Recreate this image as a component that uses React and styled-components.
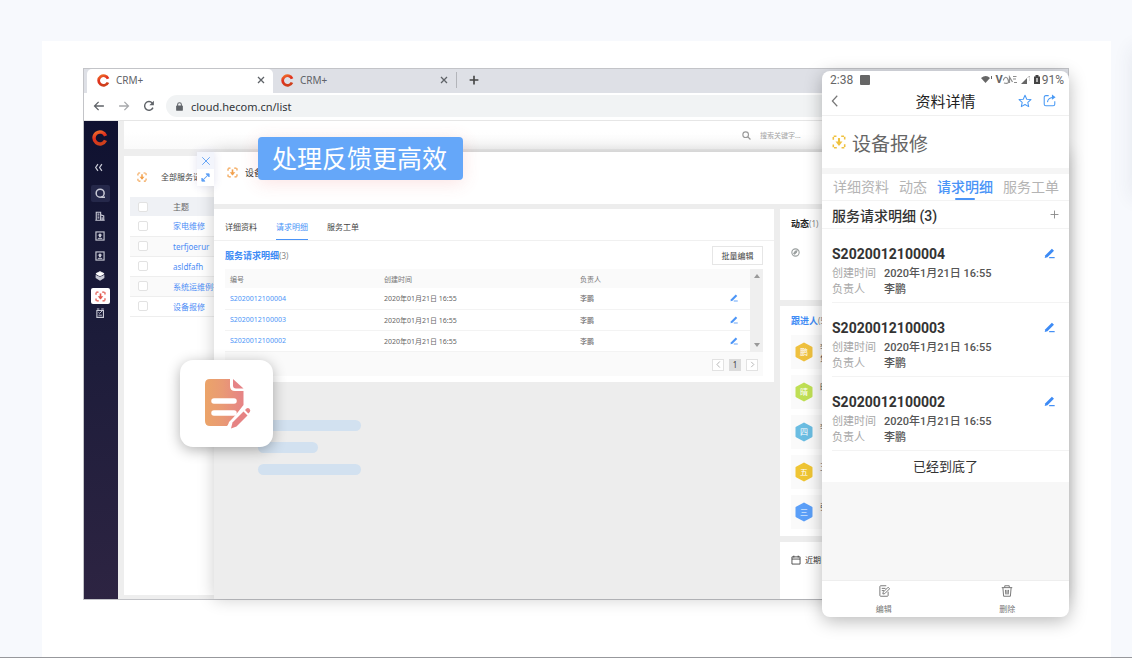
import React from "react";
import styled, { createGlobalStyle } from "styled-components";

const GlobalStyle = createGlobalStyle`
  *, *::before, *::after { box-sizing: border-box; }
  body {
    margin: 0;
    background: #f7f9fd;
    color: #333;
    font-family: "Noto Sans", "Noto Sans CJK SC", sans-serif;
    font-size: 8px;
  }
  button, input { font: inherit; color: inherit; margin: 0; }
  button { padding: 0; border: 0; background: none; display: inline-flex; align-items: center; justify-content: center; }
  a { text-decoration: none; color: inherit; }
  h1, h2, h3, p, ul, dl, dd { margin: 0; padding: 0; font-weight: inherit; font-size: inherit; }
  ul { list-style: none; }
  table { border-collapse: collapse; border-spacing: 0; table-layout: fixed; width: 100%; }
  th, td { padding: 0; text-align: left; font-weight: 400; }
  svg { display: block; flex: none; }
`;

/* ---------- page ---------- */

const Page = styled.main`
  position: relative;
  min-height: 100vh;
  padding: 41px 21px 0 42px;
  border-bottom: 1px solid #97989c;
  overflow: hidden;
  display: flex;

  &::after {
    content: "";
    position: absolute;
    left: 100%;
    top: 48px;
    width: 40px;
    height: 150px;
    box-shadow: 0 0 20px rgba(40, 50, 90, 0.09);
  }
`;

const Panel = styled.section`
  flex: 1;
  min-width: 0;
  background: #fff;
  padding: 27px 42px 57px 41px;
`;

const Stage = styled.div`
  position: relative;
`;

/* ---------- browser chrome ---------- */

const Browser = styled.div`
  display: flex;
  flex-direction: column;
  border: 1px solid #c3c4c8;
  background: #fff;
`;

const TabStrip = styled.div`
  display: flex;
  height: 24px;
  padding-left: 3px;
  background: #dee0e6;
  color: #5f6368;
`;

const BrowserTab = styled.div`
  display: flex;
  align-items: center;
  gap: 6px;
  width: ${(p) => (p.$active ? 186 : 184)}px;
  padding: 0 8px 2px 10px;
  font-size: 10px;
  background: ${(p) => (p.$active ? "#fff" : "transparent")};
  border-radius: ${(p) => (p.$active ? "5px 5px 0 0" : "0")};
  ${(p) => !p.$active && "height: 16px; margin-top: 3px; padding: 0 8px; border-right: 1px solid #b3b5ba;"}

  span { flex: 1; }
`;

const NewTab = styled.button`
  width: 34px;
  padding-bottom: 2px;
  color: #444;
`;

const AddressRow = styled.div`
  display: flex;
  align-items: center;
  height: 28px;
  padding: 0 0 1px 9px;
  gap: 13px;
  border-bottom: 1px solid #e6e6e6;
  color: #5f6368;
`;

const AddressField = styled.label`
  flex: 1;
  display: flex;
  align-items: center;
  gap: 7px;
  height: 22px;
  margin-left: -2px;
  padding-left: 9px;
  border-radius: 11px 0 0 11px;
  background: #f1f3f4;

  input {
    flex: 1;
    min-width: 0;
    border: 0;
    padding: 0;
    background: none;
    outline: 0;
    font-size: 11px;
    color: #33363a;
  }
`;

/* ---------- app shell ---------- */

const Shell = styled.div`
  display: flex;
  height: 478px;
`;

const Sidebar = styled.nav`
  display: flex;
  flex-direction: column;
  align-items: center;
  width: 34px;
  padding: 9px 2px 0 0;
  background: linear-gradient(175deg, #0f1130 0%, #1c1c3a 45%, #2d2442 100%);
  color: #c9cad6;
`;

const SideButton = styled.button`
  width: 19px;
  height: 20px;
  ${(p) => p.$first && "height: 26px; margin-top: 8px; padding-right: 4px;"}
  ${(p) => p.$boxed && "height: 17px; margin: 5px 0 4px; background: #25284a; border-radius: 2px;"}
  ${(p) => p.$active && "height: 16px; margin-top: 2px; background: #fff; color: #e2574c; border-radius: 2px;"}
  ${(p) => p.$last && "height: 17px;"}
`;

const Content = styled.div`
  flex: 1;
  min-width: 0;
  display: flex;
  flex-direction: column;
  padding-left: 6px;
  background: #eee;
`;

const TopBar = styled.div`
  display: flex;
  align-items: center;
  justify-content: flex-end;
  height: 28px;
  padding-right: 206px;
  background: linear-gradient(#fff 40%, #fafafa);
`;

const SearchField = styled.label`
  display: flex;
  align-items: center;
  gap: 9px;
  width: 120px;
  color: #999;

  input {
    width: 100px;
    border: 0;
    padding: 0;
    outline: 0;
    background: none;
    font-size: 7px;
  }
  input::placeholder { color: #a5a5a5; opacity: 1; }
`;

const Workspace = styled.div`
  flex: 1;
  min-height: 0;
  display: flex;
`;

/* ---------- left list ---------- */

const ListPane = styled.div`
  width: 90px;
  margin: 7px 0 4px;
  padding-left: 6px;
  background: #fff;
  overflow: hidden;
`;

const ListHeading = styled.h2`
  display: flex;
  align-items: center;
  gap: 14px;
  height: 41px;
  padding-left: 7px;
  white-space: nowrap;
  color: #444;
`;

const ListTable = styled.table`
  width: 120px;

  th { height: 19px; background: #eff1f5; color: #666; }
  td { height: 20px; border-bottom: 1px solid #eee; white-space: nowrap; color: #4c8df6; }
  tr:nth-child(even) td { background: #fafafa; }
  th:first-child, td:first-child { width: 43px; padding-left: 8px; }
`;

const Check = styled.input`
  display: block;
  appearance: none;
  width: 10px;
  height: 10px;
  border: 1px solid #e2e2e2;
  border-radius: 2px;
  background: #fff;
`;

/* ---------- drawer ---------- */

const Drawer = styled.div`
  position: relative;
  flex: 1;
  min-width: 0;
  display: flex;
  flex-direction: column;
  margin-top: 3px;
  background: #ededed;
  box-shadow: 0 0 16px rgba(0, 0, 0, 0.2);
`;

const DrawerTools = styled.div`
  position: absolute;
  right: 100%;
  top: 0;
  width: 17px;
  background: #fff;
  color: #5c9ff5;
  box-shadow: 0 0 8px rgba(60, 60, 160, 0.15);

  button { display: flex; width: 17px; height: 17px; }
  button:first-child { background: #f3f5fc; }
`;

const DrawerHeader = styled.h1`
  display: flex;
  align-items: center;
  gap: 7px;
  height: 52px;
  padding: 0 0 12px 13px;
  background: #fff;
  font-size: 9px;
`;

const DrawerBody = styled.div`
  flex: 1;
  min-height: 0;
  display: grid;
  grid-template-columns: 1fr 288px;
  gap: 6px;
  padding-top: 5px;
`;

const Card = styled.section`
  background: #fff;
`;

const Tabs = styled.div`
  display: flex;
  gap: 19px;
  height: 32px;
  padding: 0 11px;
  border-bottom: 1px solid #f0f0f0;
`;

const TabButton = styled.button`
  padding-top: 5px;
  border-bottom: 1px solid ${(p) => (p.$active ? "#4a94f7" : "transparent")};
  color: ${(p) => (p.$active ? "#4a94f7" : "#444")};
`;

const DetailBlock = styled.div`
  padding: 5px 11px 6px;
`;

const BlockHeading = styled.div`
  display: flex;
  align-items: center;
  justify-content: space-between;
  height: 19px;
  margin-bottom: 4px;
`;

const Heading = styled.h3`
  font-size: 9px;
  font-weight: 700;
  white-space: nowrap;
  color: ${(p) => (p.$blue ? "#3d8bf5" : "#222")};

  small { font-size: 8px; font-weight: 400; color: #888; }
`;

const OutlineButton = styled.button`
  width: 51px;
  height: 19px;
  border: 1px solid #e6e6e6;
  color: #444;
`;

const TableWrap = styled.div`
  display: flex;
`;

const DetailTable = styled.table`
  flex: 1;
  font-size: 7px;

  th { height: 19px; background: #fafafa; color: #777; }
  td { height: 21px; border-bottom: 1px solid #f3f3f3; color: #666; }
  th:first-child, td:first-child { width: 159px; padding-left: 5px; }
  th:nth-child(2) { width: 196px; }
  th:nth-child(4) { width: 20px; }
  a { color: #4c95f7; }
`;

const ScrollRail = styled.div`
  display: flex;
  flex-direction: column;
  justify-content: space-between;
  align-items: center;
  width: 13px;
  padding: 5px 0;
  background: #efefef;
  color: #999;
`;

const Pager = styled.div`
  display: flex;
  align-items: center;
  justify-content: flex-end;
  gap: 5px;
  height: 24px;
  padding: 2px 5px 0 0;
  background: #fafafa;

  button { width: 12px; height: 12px; border: 1px solid #e2e2e2; background: #fff; color: #999; }
  button[aria-current] { background: #dcdcdc; border-color: #dcdcdc; color: #444; }
`;

const Placeholders = styled.div`
  display: flex;
  flex-direction: column;
  gap: 11px;
  padding: 38px 0 0 44px;
`;

const PlaceholderBar = styled.div`
  width: ${(p) => (p.$short ? 60 : 103)}px;
  height: 11px;
  border-radius: 6px;
  background: #d2e1f0;
`;

const SideColumn = styled.div`
  display: flex;
  flex-direction: column;
  gap: 6px;
`;

const SideCard = styled(Card)`
  padding: 8px 11px 7px;
  ${(p) => p.$feed && "height: 91px;"}
  ${(p) => p.$fill && "flex: 1; padding-top: 12px;"}
`;

const FeedIcon = styled.div`
  padding-top: 18px;
  color: #9a9f9f;
`;

const People = styled.ul`
  display: flex;
  flex-direction: column;
  gap: 6px;
  margin-top: 8px;
`;

const Person = styled.li`
  display: flex;
  align-items: center;
  gap: 7px;
  height: 34px;
  padding-left: 4px;
  background: #fafafa;
  color: #444;

  p { height: 22px; line-height: 11px; }
`;

const Schedule = styled.h3`
  display: flex;
  align-items: center;
  gap: 4px;
`;

/* ---------- overlays ---------- */

const Callout = styled.p`
  position: absolute;
  left: 175px;
  top: 69px;
  padding: 0 16px 0 14px;
  line-height: 43px;
  border-radius: 4px;
  background: #65a7f9;
  color: #fff;
  font-size: 25px;
  box-shadow: 0 3px 18px rgba(230, 80, 80, 0.16);
`;

const Tile = styled.div`
  position: absolute;
  left: 97px;
  top: 292px;
  display: flex;
  align-items: center;
  justify-content: center;
  width: 93px;
  height: 87px;
  padding-left: 3px;
  border-radius: 13px;
  background: #fff;
  box-shadow: 0 3px 14px rgba(0, 0, 0, 0.3);
`;

const Phone = styled.article`
  position: absolute;
  right: 0;
  top: 3px;
  width: 247px;
  border-radius: 8px;
  background: #fff;
  box-shadow: 0 4px 18px rgba(0, 0, 0, 0.28);
  font-family: Roboto, "Noto Sans CJK SC", sans-serif;
`;

const StatusBar = styled.div`
  display: flex;
  align-items: center;
  height: 17px;
  padding: 0 5px 0 8px;
  font-size: 12px;
  color: #666;

  svg { margin-left: 4px; }
  svg:first-of-type { margin: 0 auto 0 7px; }
  b { margin-left: 3px; font-size: 11px; }
  b + svg { margin-left: 0; }
  span { margin-left: 2px; }
`;

const PhoneHeader = styled.header`
  display: grid;
  grid-template-columns: 54px 1fr 48px;
  align-items: center;
  height: 28px;
  padding: 0 13px 2px 7px;
  border-bottom: 1px solid #f0f0f0;
  font-size: 15px;
  color: #222;
  text-align: center;

  button { justify-content: flex-start; color: #777; }
`;

const HeaderActions = styled.div`
  display: flex;
  justify-content: flex-end;
  gap: 11px;

  button { color: #4a9af5; }
`;

const PhoneTitle = styled.h2`
  display: flex;
  align-items: center;
  gap: 6px;
  height: 58px;
  padding: 0 10px;
  border-bottom: 6px solid #f5f5f5;
  font-size: 19px;
  color: #666;
`;

const PhoneTabs = styled.div`
  display: flex;
  justify-content: space-between;
  height: 27px;
  padding: 0 10px 0 11px;
  border-bottom: 1px solid #f3f3f3;
`;

const PhoneTab = styled.button`
  position: relative;
  padding-bottom: 2px;
  font-size: 14px;
  color: ${(p) => (p.$active ? "#4a94f7" : "#b4b4b4")};
  font-weight: ${(p) => (p.$active ? 500 : 400)};

  &::after {
    content: "";
    position: absolute;
    bottom: 0;
    width: 20px;
    height: 2px;
    border-radius: 1px;
    background: ${(p) => (p.$active ? "#4a94f7" : "transparent")};
  }
`;

const PhoneSection = styled.div`
  display: flex;
  align-items: center;
  justify-content: space-between;
  height: 28px;
  padding: 0 10px;
  border-bottom: 1px solid #f3f3f3;
  font-size: 14px;
  font-weight: 500;
  color: #333;

  button { color: #888; }
`;

const Record = styled.li`
  height: 74px;
  margin-left: 10px;
  padding: 13px 14px 0 0;
  border-bottom: 1px solid #f3f3f3;
`;

const RecordTitle = styled.h3`
  display: flex;
  align-items: center;
  justify-content: space-between;
  height: 24px;
  padding-bottom: 1px;
  font-size: 14px;
  font-weight: 700;
  color: #333;

  button { color: #3d8bf5; }
`;

const Fields = styled.dl`
  display: grid;
  grid-template-columns: 52px 1fr;
  font-size: 11px;
  line-height: 16px;

  dt { color: #a8a8a8; }
  dd { color: #555; font-weight: 500; }
`;

const EndNote = styled.p`
  height: 31px;
  line-height: 31px;
  text-align: center;
  font-size: 13px;
  color: #333;
`;

const PhoneSpace = styled.div`
  height: 98px;
  background: #f7f7f7;
`;

const PhoneFooter = styled.footer`
  display: grid;
  grid-template-columns: 1fr 1fr;
  height: 37px;
  border-top: 1px solid #eee;
  color: #777;

  button { flex-direction: column; gap: 6px; }
`;

/* ---------- icons ---------- */

const Svg = ({ w = 10, h, vb = "0 0 16 16", children }) => (
  <svg width={w} height={h || w} viewBox={vb} fill="none" stroke="currentColor" strokeWidth="1.5" aria-hidden="true">
    {children}
  </svg>
);

const Logo = ({ size }) => (
  <Svg w={size}>
    <defs>
      <linearGradient id="logo" x1="0" y1="0" x2="0.4" y2="1">
        <stop offset="0" stopColor="#f0702a" />
        <stop offset="0.5" stopColor="#e0301e" />
        <stop offset="1" stopColor="#cf3f1c" />
      </linearGradient>
    </defs>
    <path d="M13.600 5.800A6 6 0 1 0 13.500 10.400" stroke="url(#logo)" strokeWidth="3.400" />
  </Svg>
);

const CloseIcon = ({ size, thin }) => (
  <Svg w={size}><path d="M2 2l12 12M14 2L2 14" strokeWidth={thin ? 1.5 : 2.6} /></Svg>
);

const PlusIcon = ({ size, thin }) => (
  <Svg w={size}><path d="M8 1v14M1 8h14" strokeWidth={thin ? 1.6 : 2.6} /></Svg>
);

const ArrowIcon = ({ flip }) => (
  <Svg w={12}><path d={flip ? "M1.5 8h12.5M8.5 2.5L14 8l-5.500 5.500" : "M14.500 8H2M7.500 2.500L2 8l5.500 5.500"} strokeWidth="1.7" opacity={flip ? 0.55 : 1} /></Svg>
);

const ReloadIcon = () => (
  <Svg w={12}>
    <path d="M13.300 10.200A5.800 5.800 0 1 1 12.300 4" strokeWidth="1.900" />
    <path d="M14.500 1v6h-6z" fill="currentColor" stroke="none" />
  </Svg>
);

const LockIcon = () => (
  <Svg w={9}>
    <rect x="2" y="6" width="12" height="9.500" rx="1.500" fill="currentColor" stroke="none" />
    <path d="M4.700 7V4.500a3.300 3.300 0 0 1 6.600 0V7" strokeWidth="1.800" />
  </Svg>
);

const SearchIcon = ({ size }) => (
  <Svg w={size}><circle cx="6.500" cy="6.500" r="5" strokeWidth="2" /><path d="M10 10l5 5" strokeWidth="2.200" /></Svg>
);

const QIcon = () => (
  <Svg w={11}><circle cx="7.500" cy="7.500" r="5.800" strokeWidth="2.200" /><path d="M9 13.400h5.500" strokeWidth="2.200" /></Svg>
);

const ScanIcon = ({ size }) => (
  <Svg w={size}>
    <path d="M1.500 5.500V1.500h4M10.500 1.500h4v4M14.500 10.500v4h-4M5.500 14.500h-4v-4" strokeWidth="1.800" strokeLinejoin="round" strokeDasharray="3.200 1.200" />
    <path d="M8 3.500V11" strokeWidth="2.400" />
    <path d="M4 7.500h8L8 12.500z" fill="currentColor" stroke="none" />
  </Svg>
);

const EditIcon = ({ size }) => (
  <Svg w={size}>
    <path d="M1 14.500l1-4L11.500 1l3 3L5 13.500z" fill="currentColor" stroke="none" />
    <path d="M7.500 14h8" strokeWidth="1.700" />
  </Svg>
);

const ChevronIcon = ({ size, right }) => (
  <Svg w={size}><path d={right ? "M5 2l6 6-6 6" : "M11 1L4.500 8l6.500 7"} strokeWidth="1.600" /></Svg>
);

const DoubleChevron = () => (
  <Svg w={9}><path d="M7 2L3 8l4 6M14 2l-4 6 4 6" strokeWidth="2.200" /></Svg>
);

const BuildingIcon = () => (
  <Svg w={10}><path d="M2 15V2h7v13M9 6l5 2v7M0.500 14.800h15M4 5h3M4 8h3M4 11h3M11.500 10v4" strokeWidth="1.800" /></Svg>
);

const BadgeIcon = () => (
  <Svg w={10}>
    <rect x="1.500" y="1.500" width="13" height="13" strokeWidth="1.800" />
    <path d="M8 3.500l4 3.800H9.700V10H6.300V7.300H4z" fill="currentColor" stroke="none" />
    <path d="M4.500 11.800h7" />
  </Svg>
);

const BoxIcon = () => (
  <Svg w={10}>
    <path d="M8 1l6.500 3.200L8 8 1.500 4.200z" fill="#fff" stroke="#fff" />
    <path d="M1 6l7 3.500L15 6v5l-7 4.500L1 11z" fill="currentColor" stroke="none" />
  </Svg>
);

const ChecklistIcon = () => (
  <Svg w={10}>
    <path d="M3 4h10.500v11H3zM3 1.500h4M10 1.500h4" strokeWidth="1.800" />
    <path d="M5.500 7l2 1.500L12 4M5.500 11.500h5.500" />
  </Svg>
);

const ExpandIcon = () => (
  <Svg w={9}>
    <path d="M4 12l8-8" strokeWidth="1.800" />
    <path d="M9 1.500h5.500V7zM1.500 9v5.500H7z" fill="currentColor" />
  </Svg>
);

const Triangle = ({ down }) => (
  <svg width="6" height="4" viewBox="0 0 6 4" aria-hidden="true"><path d={down ? "M0 0h6L3 4z" : "M0 4h6L3 0z"} fill="currentColor" /></svg>
);

const CompassIcon = () => (
  <Svg w={9}><circle cx="8" cy="8" r="6.500" strokeWidth="2" /><path d="M3.500 10L7 5l5-1.500L10.500 8l-4 4z" fill="currentColor" stroke="none" /></Svg>
);

const CalendarIcon = () => (
  <Svg w={10}><path d="M1.500 3h13v11.500h-13zM1.500 6.500h13M4.500 1v3M11.500 1v3" strokeWidth="1.300" /></Svg>
);

const HexAvatar = ({ color, label }) => (
  <svg width="18" height="20" viewBox="0 0 18 20" role="img" aria-label={label}>
    <path d="M9 1.500L16.500 5.700v8.600L9 18.500 1.500 14.300V5.700z" fill={color} stroke={color} strokeWidth="2" strokeLinejoin="round" />
    <text x="9" y="13" fontSize="8" fill="#fff" textAnchor="middle">{label}</text>
  </svg>
);

const DocumentIcon = () => (
  <svg width="46" height="50" viewBox="0 0 46 50" aria-hidden="true">
    <defs>
      <linearGradient id="doc" x1="0" y1="0.300" x2="1" y2="0.300">
        <stop offset="0" stopColor="#eba469" />
        <stop offset="0.450" stopColor="#e99a74" />
        <stop offset="1" stopColor="#e68386" />
      </linearGradient>
    </defs>
    <path d="M5 0h20v7q0 5 5 5h8.500v14L22 47H5q-5 0-5-5V5q0-5 5-5z" fill="url(#doc)" />
    <path d="M28 0l10.500 9.500H31q-3 0-3-3z" fill="#e68386" />
    <path d="M9 22h20M9 34h20" stroke="#fff" strokeWidth="5.500" strokeLinecap="round" />
    <path d="M37 30L24 43l-2 7h9l14-15z" fill="#fff" />
    <path d="M26 49.500l1.500-6L38.500 32.500l4 4-11 11z" fill="#e68383" />
    <path d="M40 31l1.500-1.500q1.500-1 3 .300 1.500 1.700.3 3.200L43.300 34.500z" fill="#e68383" />
  </svg>
);

const StarIcon = () => (
  <Svg w={14}><path d="M8 1.500l2 4.400 4.800.5-3.600 3.200 1 4.800L8 12l-4.200 2.400 1-4.800L1.200 6.400 6 5.900z" strokeWidth="1.200" strokeLinejoin="round" /></Svg>
);

const ShareIcon = () => (
  <Svg w={13}>
    <path d="M7 2H3.500Q1.500 2 1.500 4v8.500q0 2 2 2h9q2 0 2-2V9" strokeWidth="1.300" />
    <path d="M5.500 10q.5-5.500 8-6" strokeWidth="1.300" />
    <path d="M11 .500L15.500 4 11 7z" fill="currentColor" stroke="none" />
  </Svg>
);

const NoteIcon = () => (
  <Svg w={12}>
    <path d="M13.500 9v5q0 1-1 1h-9q-1 0-1-1V2q0-1 1-1H11M5 4.500h5M5 7.500h3" strokeWidth="1.300" />
    <path d="M6.500 12l.5-2.500L13.500 3 15.500 5 9 11.500z" strokeWidth="1.300" />
  </Svg>
);

const TrashIcon = () => (
  <Svg w={12}><path d="M1 3.500h14M5 3.500V1h6v2.500M2.500 3.500l1 11.500h9l1-11.500M6 6.500l.4 6M10 6.500l-.4 6M8 6.500v6" strokeWidth="1.300" /></Svg>
);

/* ---------- data ---------- */

const listRows = ["家电维修", "terfjoerur", "asldfafh", "系统运维例行", "设备报修"];
const requests = ["S2020012100004", "S2020012100003", "S2020012100002"];
const people = [
  { mark: "鹏", name: "李鹏", role: "负责人", color: "#efc13f" },
  { mark: "晴", name: "晴晴", color: "#bfdf55" },
  { mark: "四", name: "李四", color: "#6bbde2" },
  { mark: "五", name: "王五", color: "#efc534" },
  { mark: "三", name: "张三", color: "#5b9ff8" },
];
const detailTabs = ["详细资料", "请求明细", "服务工单"];
const phoneTabs = ["详细资料", "动态", "请求明细", "服务工单"];

/* ---------- parts ---------- */

const Orange = styled.span`
  color: ${(p) => (p.$gold ? "#efc13f" : "#f2a04c")};
`;

function BrowserChrome() {
  return (
    <>
      <TabStrip>
        {[true, false].map((active) => (
          <BrowserTab key={String(active)} $active={active}>
            <Logo size={13} />
            <span>CRM+</span>
            <button aria-label="关闭标签"><CloseIcon size={8} /></button>
          </BrowserTab>
        ))}
        <NewTab aria-label="新标签"><PlusIcon size={10} /></NewTab>
      </TabStrip>
      <AddressRow>
        <button aria-label="后退"><ArrowIcon /></button>
        <button aria-label="前进"><ArrowIcon flip /></button>
        <button aria-label="刷新"><ReloadIcon /></button>
        <AddressField>
          <LockIcon />
          <input aria-label="地址" defaultValue="cloud.hecom.cn/list" />
        </AddressField>
      </AddressRow>
    </>
  );
}

function SideNav() {
  return (
    <Sidebar>
      <Logo size={16} />
      <SideButton $first aria-label="收起"><DoubleChevron /></SideButton>
      <SideButton $boxed aria-label="搜索"><QIcon /></SideButton>
      <SideButton aria-label="公司"><BuildingIcon /></SideButton>
      <SideButton aria-label="客户"><BadgeIcon /></SideButton>
      <SideButton aria-label="联系人"><BadgeIcon /></SideButton>
      <SideButton aria-label="产品"><BoxIcon /></SideButton>
      <SideButton $active aria-label="服务"><ScanIcon size={11} /></SideButton>
      <SideButton $last aria-label="工单"><ChecklistIcon /></SideButton>
    </Sidebar>
  );
}

function RequestList() {
  return (
    <ListPane>
      <ListHeading><Orange><ScanIcon size={10} /></Orange>全部服务请求</ListHeading>
      <ListTable>
        <thead>
          <tr><th><Check type="checkbox" aria-label="全选" /></th><th>主题</th></tr>
        </thead>
        <tbody>
          {listRows.map((name) => (
            <tr key={name}>
              <td><Check type="checkbox" aria-label={name} /></td>
              <td><a href="#list">{name}</a></td>
            </tr>
          ))}
        </tbody>
      </ListTable>
    </ListPane>
  );
}

function DetailCard() {
  return (
    <Card>
      <Tabs>
        {detailTabs.map((t, i) => <TabButton key={t} $active={i === 1}>{t}</TabButton>)}
      </Tabs>
      <DetailBlock>
        <BlockHeading>
          <Heading $blue>服务请求明细<small>(3)</small></Heading>
          <OutlineButton>批量编辑</OutlineButton>
        </BlockHeading>
        <TableWrap>
          <DetailTable>
            <thead>
              <tr><th>编号</th><th>创建时间</th><th>负责人</th><th aria-label="操作" /></tr>
            </thead>
            <tbody>
              {requests.map((id) => (
                <tr key={id}>
                  <td><a href="#request">{id}</a></td>
                  <td>2020年01月21日 16:55</td>
                  <td>李鹏</td>
                  <td><a href="#edit" aria-label="编辑"><EditIcon size={8} /></a></td>
                </tr>
              ))}
            </tbody>
          </DetailTable>
          <ScrollRail><Triangle /><Triangle down /></ScrollRail>
        </TableWrap>
        <Pager>
          <button aria-label="上一页"><ChevronIcon size={7} /></button>
          <button aria-current="page">1</button>
          <button aria-label="下一页"><ChevronIcon size={7} right /></button>
        </Pager>
      </DetailBlock>
    </Card>
  );
}

function Activity() {
  return (
    <SideColumn>
      <SideCard $feed>
        <Heading>动态<small>(1)</small></Heading>
        <FeedIcon><CompassIcon /></FeedIcon>
      </SideCard>
      <SideCard>
        <Heading $blue>跟进人<small>(5)</small></Heading>
        <People>
          {people.map((p) => (
            <Person key={p.mark}>
              <HexAvatar color={p.color} label={p.mark} />
              <p>{p.name}<br />{p.role}</p>
            </Person>
          ))}
        </People>
      </SideCard>
      <SideCard $fill>
        <Schedule><CalendarIcon />近期日程</Schedule>
      </SideCard>
    </SideColumn>
  );
}

function PhoneView() {
  return (
    <Phone>
      <StatusBar>
        2:38
        <Svg w={10} vb="0 0 10 10"><rect width="10" height="10" rx="1" fill="currentColor" stroke="none" /></Svg>
        <Svg w={12} h={8} vb="0 0 12 8"><path d="M0 2q5-4 9 0L4.500 7z" fill="currentColor" stroke="none" /><path d="M10.500 0v3" strokeWidth="1" /></Svg>
        <b>V</b>
        <Svg w={14} h={9} vb="0 0 14 9"><path d="M0 5.500q3-6 5-1t-4 3.500M6.500 8V2l3 5M10 1.500h3.500M10 4h3M11 7.500h3" strokeWidth="1.200" opacity=".75" /></Svg>
        <Svg w={9} h={8} vb="0 0 9 8"><path d="M0 8L6 2v6z" fill="currentColor" stroke="none" /><path d="M6.500 1.500L9 0v5" strokeWidth=".8" opacity=".6" /></Svg>
        <Svg w={6} h={9} vb="0 0 6 9"><path d="M0 1.500h1.500V0h3v1.500H6V9H0z" fill="#444" stroke="none" /><path d="M3 3v4" stroke="#fff" strokeWidth="1.200" /></Svg>
        <span>91%</span>
      </StatusBar>
      <PhoneHeader>
        <button aria-label="返回"><ChevronIcon size={12} /></button>
        <h1>资料详情</h1>
        <HeaderActions>
          <button aria-label="收藏"><StarIcon /></button>
          <button aria-label="分享"><ShareIcon /></button>
        </HeaderActions>
      </PhoneHeader>
      <PhoneTitle><Orange $gold><ScanIcon size={14} /></Orange>设备报修</PhoneTitle>
      <PhoneTabs>
        {phoneTabs.map((t) => <PhoneTab key={t} $active={t === "请求明细"}>{t}</PhoneTab>)}
      </PhoneTabs>
      <PhoneSection>
        服务请求明细 (3)
        <button aria-label="新增"><PlusIcon size={9} thin /></button>
      </PhoneSection>
      <ul>
        {requests.map((id) => (
          <Record key={id}>
            <RecordTitle>{id}<button aria-label="编辑"><EditIcon size={11} /></button></RecordTitle>
            <Fields>
              <dt>创建时间</dt><dd>2020年1月21日 16:55</dd>
              <dt>负责人</dt><dd>李鹏</dd>
            </Fields>
          </Record>
        ))}
      </ul>
      <EndNote>已经到底了</EndNote>
      <PhoneSpace />
      <PhoneFooter>
        <button><NoteIcon />编辑</button>
        <button><TrashIcon />删除</button>
      </PhoneFooter>
    </Phone>
  );
}

export default function App() {
  return (
    <Page>
      <GlobalStyle />
      <Panel>
        <Stage>
          <Browser>
            <BrowserChrome />
            <Shell>
              <SideNav />
              <Content>
                <TopBar>
                  <SearchField>
                    <SearchIcon size={9} />
                    <input aria-label="搜索关键字" placeholder="搜索关键字..." />
                  </SearchField>
                </TopBar>
                <Workspace>
                  <RequestList />
                  <Drawer>
                    <DrawerTools>
                      <button aria-label="关闭"><CloseIcon size={10} thin /></button>
                      <button aria-label="展开"><ExpandIcon /></button>
                    </DrawerTools>
                    <DrawerHeader><Orange><ScanIcon size={11} /></Orange>设备报修</DrawerHeader>
                    <DrawerBody>
                      <div>
                        <DetailCard />
                        <Placeholders>
                          <PlaceholderBar />
                          <PlaceholderBar $short />
                          <PlaceholderBar />
                        </Placeholders>
                      </div>
                      <Activity />
                    </DrawerBody>
                  </Drawer>
                </Workspace>
              </Content>
            </Shell>
          </Browser>
          <Callout>处理反馈更高效</Callout>
          <Tile><DocumentIcon /></Tile>
          <PhoneView />
        </Stage>
      </Panel>
    </Page>
  );
}
